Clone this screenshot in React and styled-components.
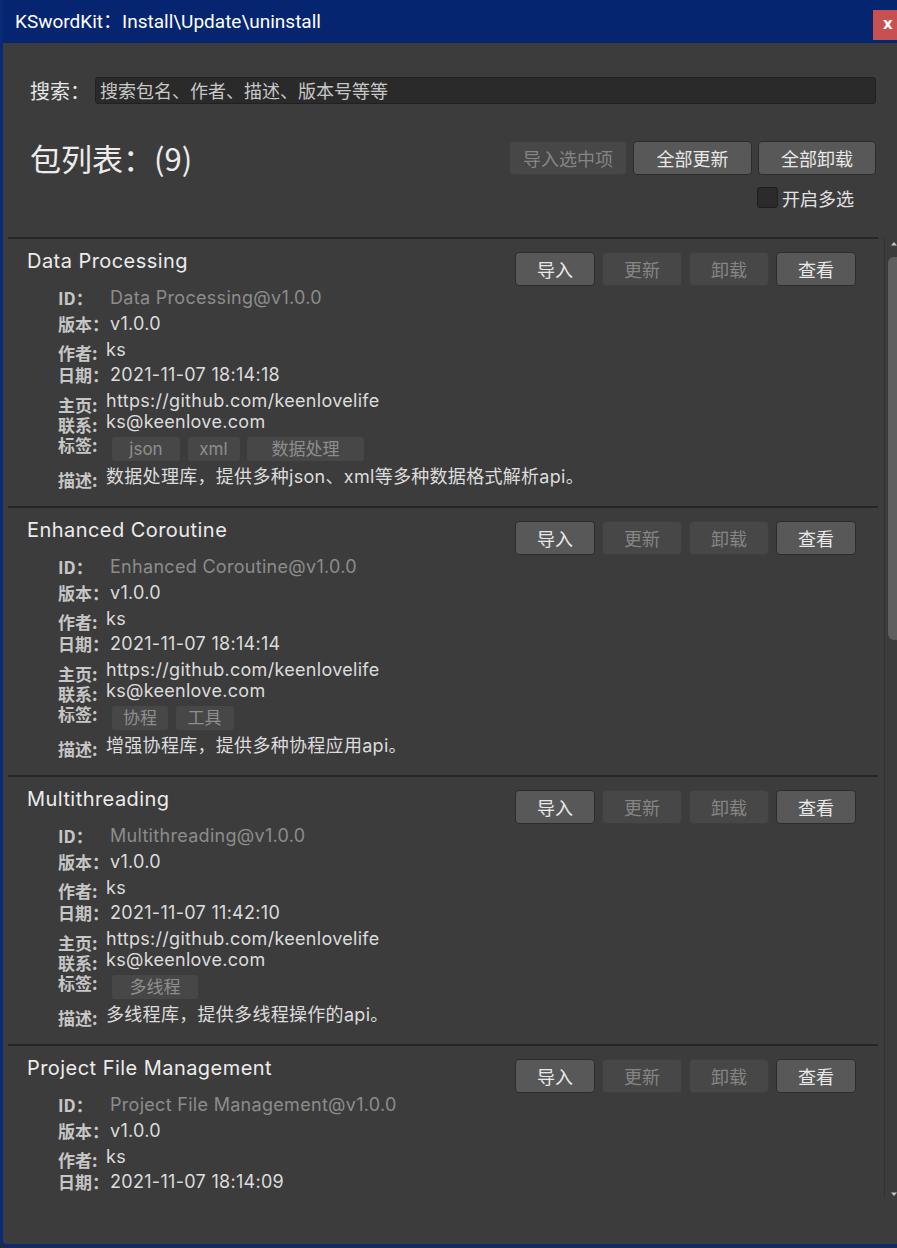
import React from "react";
import styled, { createGlobalStyle } from "styled-components";

const Global = createGlobalStyle`
  html, body { margin: 0; padding: 0; background: #2a2a2a; overflow: hidden; }
  * { box-sizing: border-box; }
`;

const CJK = `"Noto Sans CJK SC", "Noto Sans", sans-serif`;
const UI = `Inter, "Noto Sans CJK SC", sans-serif`;

const Window = styled.div`
  width: 897px;
  height: 1247px;
  display: flex;
  flex-direction: column;
  border-left: 3px solid #0a2a78;
  border-bottom: 3px solid #0a2a78;
  border-bottom-left-radius: 6px;
  background: #3c3c3c;
  overflow: hidden;
`;

const TitleBar = styled.div`
  height: 43px;
  flex: none;
  background: #062571;
  display: flex;
  justify-content: space-between;
  align-items: flex-start;
  margin-left: -3px;
  padding-left: 15px;
`;

const TitleText = styled.div`
  font-family: Roboto, ${CJK};
  font-size: 19px;
  color: #ffffff;
  line-height: 43px;
`;

const CloseBtn = styled.div`
  margin-top: 10px;
  width: 24px;
  height: 30px;
  background: #c75050;
  color: #fff;
  font-family: "DejaVu Sans", sans-serif;
  font-weight: bold;
  font-size: 15px;
  line-height: 29px;
  padding-left: 10px;
`;

const Body = styled.div`
  flex: 1;
  display: flex;
  flex-direction: column;
`;

const SearchRow = styled.div`
  margin-top: 34px;
  padding: 0 21px 0 27px;
  display: flex;
  align-items: center;
  height: 27px;
`;

const SearchLabel = styled.div`
  font-family: ${CJK};
  font-size: 20px;
  color: #e6e6e6;
  width: 65px;
  flex: none;
`;

const SearchInput = styled.div`
  flex: 1;
  height: 27px;
  background: #2a2a2a;
  border: 1px solid #212121;
  border-radius: 3px;
  font-family: ${CJK};
  font-size: 18px;
  color: #c8c8c8;
  line-height: 25px;
  padding-left: 4px;
`;

const HeaderRow = styled.div`
  margin-top: 37px;
  padding: 0 21px 0 27px;
  display: flex;
  align-items: center;
  justify-content: space-between;
  height: 34px;
`;

const ListTitle = styled.div`
  font-family: ${CJK};
  font-size: 31px;
  color: #ececec;
  line-height: 34px;
`;

const Group = styled.div`
  display: flex;
  gap: ${(p) => p.$gap}px;
`;

const Button = styled.div`
  width: ${(p) => p.$w}px;
  height: 34px;
  border-radius: 4px;
  border: 1px solid ${(p) => (p.$disabled ? "#3f3f3f" : "#2c2c2c")};
  background: ${(p) => (p.$disabled ? "#474747" : "#585858")};
  color: ${(p) => (p.$disabled ? "#858585" : "#e8e8e8")};
  font-family: ${CJK};
  font-size: 18px;
  text-align: center;
  line-height: 32px;
`;

const CheckRow = styled.div`
  margin-top: 12px;
  padding-right: 43px;
  display: flex;
  justify-content: flex-end;
  align-items: center;
  height: 21px;
  gap: 4px;
`;

const CheckBox = styled.div`
  width: 21px;
  height: 21px;
  background: #2b2b2b;
  border: 1px solid #1e1e1e;
  border-radius: 3px;
`;

const CheckText = styled.div`
  font-family: ${CJK};
  font-size: 18px;
  color: #e2e2e2;
`;

const ScrollArea = styled.div`
  margin-top: 29px;
  height: 961px;
  flex: none;
  display: flex;
`;

const ScrollContent = styled.div`
  flex: 1;
  overflow: hidden;
`;

const Item = styled.div`
  display: flex;
  flex-direction: column;
`;

const Separator = styled.div`
  height: 2px;
  margin: 0 6px 0 5px;
  background: #262626;
`;

const ItemHeader = styled.div`
  height: 47px;
  padding: 10px 28px 0 24px;
  display: flex;
  justify-content: space-between;
  align-items: flex-start;
`;

const ItemTitle = styled.div`
  font-family: ${UI};
  font-size: 20px;
  letter-spacing: 0.45px;
  line-height: 24px;
  color: #ececec;
`;

const ItemButtons = styled(Group)`
  margin-top: 3px;
`;

const Rows = styled.div`
  padding: 0 0 17px 55px;
  display: flex;
  flex-direction: column;
`;

const Row = styled.div`
  height: ${(p) => p.$h}px;
  display: flex;
  align-items: flex-start;
`;

const Label = styled.div`
  width: ${(p) => p.$w}px;
  flex: none;
  font-family: ${CJK};
  font-weight: bold;
  font-size: 17px;
  line-height: 20px;
  color: #c6c6c6;
  margin-top: ${(p) => 2 + (p.$shift || 0)}px;
`;

const Value = styled.div`
  font-family: ${UI};
  font-size: 18px;
  letter-spacing: 0.3px;
  line-height: 20px;
  margin-top: 2px;
  color: ${(p) => (p.$muted ? "#8c8c8c" : "#dcdcdc")};
  white-space: nowrap;
`;

const Tags = styled.div`
  display: flex;
  gap: 7.5px;
`;

const Tag = styled.div`
  width: ${(p) => p.$w}px;
  height: 24px;
  background: #474747;
  border-radius: 3px;
  font-family: ${UI};
  font-size: 17px;
  line-height: 24px;
  text-align: center;
  color: #8e8e8e;
`;

const ScrollBar = styled.div`
  width: 13px;
  flex: none;
  border-left: 1px solid #313131;
  display: flex;
  flex-direction: column;
  padding-left: 3px;
`;

const Arrow = styled.div`
  height: ${(p) => p.$h}px;
  flex: none;
  display: flex;
  align-items: ${(p) => (p.$down ? "flex-end" : "flex-start")};
  padding: ${(p) => (p.$down ? "0 0 0 3px" : "3px 0 0 3px")};
`;

const Track = styled.div`
  flex: 1;
`;

const Thumb = styled.div`
  margin-top: 3px;
  height: 383px;
  background: #5f5f5f;
  border-radius: 6px 0 0 6px;
`;

const Triangle = ({ down }) => (
  <svg width="10" height="7" viewBox="0 0 10 7">
    <polygon points={down ? "0,0 10,0 5,6" : "0,7 10,7 5,1"} fill="#c4c4c4" />
  </svg>
);

const items = [
  {
    name: "Data Processing",
    date: "2021-11-07 18:14:18",
    tags: [["json", 68], ["xml", 52], ["数据处理", 117]],
    desc: "数据处理库，提供多种json、xml等多种数据格式解析api。",
  },
  {
    name: "Enhanced Coroutine",
    date: "2021-11-07 18:14:14",
    tags: [["协程", 56], ["工具", 58]],
    desc: "增强协程库，提供多种协程应用api。",
  },
  {
    name: "Multithreading",
    date: "2021-11-07 11:42:10",
    tags: [["多线程", 86]],
    desc: "多线程库，提供多线程操作的api。",
  },
  {
    name: "Project File Management",
    date: "2021-11-07 18:14:09",
    tags: [["文件管理", 100]],
    desc: "项目文件管理库，提供文件操作api。",
  },
];

const PackageItem = ({ it }) => (
  <Item>
    <Separator />
    <ItemHeader>
      <ItemTitle>{it.name}</ItemTitle>
      <ItemButtons $gap={7}>
        <Button $w={80}>导入</Button>
        <Button $w={80} $disabled>更新</Button>
        <Button $w={80} $disabled>卸载</Button>
        <Button $w={80}>查看</Button>
      </ItemButtons>
    </ItemHeader>
    <Rows>
      <Row $h={26}>
        <Label $w={52}>ID：</Label>
        <Value $muted>{it.name}@v1.0.0</Value>
      </Row>
      <Row $h={26}>
        <Label $w={52}>版本：</Label>
        <Value>v1.0.0</Value>
      </Row>
      <Row $h={25}>
        <Label $w={48} $shift={3}>作者:</Label>
        <Value>ks</Value>
      </Row>
      <Row $h={26}>
        <Label $w={52}>日期：</Label>
        <Value>{it.date}</Value>
      </Row>
      <Row $h={21}>
        <Label $w={48} $shift={4}>主页:</Label>
        <Value>https://github.com/keenlovelife</Value>
      </Row>
      <Row $h={27}>
        <Label $w={48} $shift={3}>联系:</Label>
        <Value>ks@keenlove.com</Value>
      </Row>
      <Row $h={28}>
        <Label $w={54} $shift={-4}>标签:</Label>
        <Tags>
          {it.tags.map(([t, w]) => (
            <Tag key={t} $w={w}>{t}</Tag>
          ))}
        </Tags>
      </Row>
      <Row $h={24}>
        <Label $w={48} $shift={3}>描述:</Label>
        <Value>{it.desc}</Value>
      </Row>
    </Rows>
  </Item>
);

export default function App() {
  return (
    <>
      <Global />
      <Window>
        <TitleBar>
          <TitleText>KSwordKit：Install\Update\uninstall</TitleText>
          <CloseBtn>x</CloseBtn>
        </TitleBar>
        <Body>
          <SearchRow>
            <SearchLabel>搜索：</SearchLabel>
            <SearchInput>搜索包名、作者、描述、版本号等等</SearchInput>
          </SearchRow>
          <HeaderRow>
            <ListTitle>包列表：(9)</ListTitle>
            <Group $gap={6}>
              <Button $w={118} $disabled>导入选中项</Button>
              <Button $w={119}>全部更新</Button>
              <Button $w={118}>全部卸载</Button>
            </Group>
          </HeaderRow>
          <CheckRow>
            <CheckBox />
            <CheckText>开启多选</CheckText>
          </CheckRow>
          <ScrollArea>
            <ScrollContent>
              {items.map((it) => (
                <PackageItem key={it.name} it={it} />
              ))}
            </ScrollContent>
            <ScrollBar>
              <Arrow $h={17}>
                <Triangle />
              </Arrow>
              <Track>
                <Thumb />
              </Track>
              <Arrow $h={17} $down>
                <Triangle down />
              </Arrow>
            </ScrollBar>
          </ScrollArea>
        </Body>
      </Window>
    </>
  );
}
